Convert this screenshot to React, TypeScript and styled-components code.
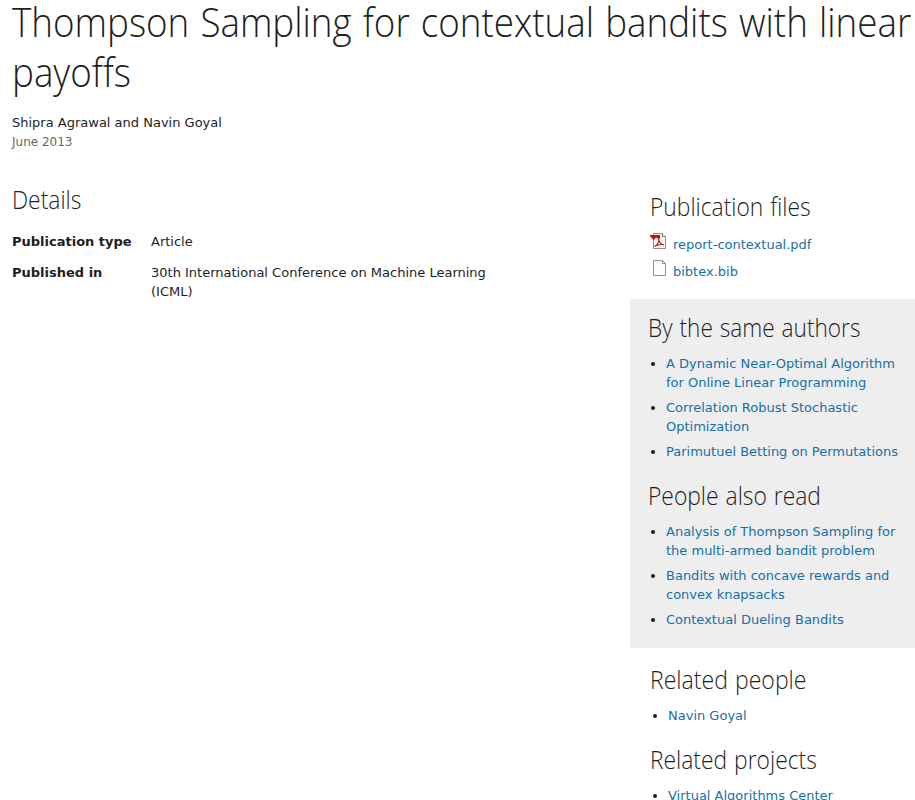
import React from "react";
import styled, { createGlobalStyle } from "styled-components";

const GlobalStyle = createGlobalStyle`
  * { box-sizing: border-box; }
  html, body { margin: 0; padding: 0; background: #fff; overflow: hidden; }
  body { font: 13px/19px "DejaVu Sans", Verdana, sans-serif; color: #1e1e1e; }
`;

const Page = styled.div`
  display: flow-root;
  width: 915px;
  height: 800px;
  overflow: hidden;
`;

const Header = styled.header`
  padding-left: 12px;
`;

const Title = styled.h1`
  margin: -3px 0 0;
  font: 300 40px/50px "Open Sans", "Noto Sans", sans-serif;
  color: #1e1e1e;
`;

const TitleLine = styled.span`
  display: block;
  width: max-content;
  transform: scaleX(0.919);
  transform-origin: 0 0;
  word-spacing: 1.700px;
  white-space: nowrap;
`;

const Authors = styled.div`
  margin-top: 16px;
`;

const PublishDate = styled.div`
  height: 19px;
  padding-top: 1px;
  font-size: 12px;
  line-height: 18px;
  color: #666;
`;

const Columns = styled.div`
  display: grid;
  grid-template-columns: 618px 285px;
  padding-left: 12px;
`;

const Details = styled.main`
  padding-top: 32px;
`;

const Heading = styled.h2<{ $stretch?: number }>`
  margin: 0;
  width: max-content;
  font: 300 26px/32px "Open Sans", "Noto Sans", sans-serif;
  color: #1e1e1e;
  white-space: nowrap;
  transform: scaleX(${(p) => p.$stretch ?? 0.878});
  transform-origin: 0 0;
  word-spacing: 1.2px;
`;

const Facts = styled.dl`
  display: grid;
  grid-template-columns: 139px 350px;
  row-gap: 12px;
  margin: 17px 0 0;
`;

const Term = styled.dt`
  font-weight: bold;
`;

const Value = styled.dd`
  margin: 0;
`;

const Sidebar = styled.aside`
  padding-top: 39px;
`;

const Section = styled.section`
  padding-left: 20px;
`;

const Files = styled.div`
  margin-top: 9px;
  display: grid;
  grid-auto-rows: 27px;
`;

const FileRow = styled.div`
  display: flex;
  height: 27px;

  svg { flex: none; margin-right: 7px; margin-top: 2px; }
`;

const Link = styled.a`
  color: #1570a6;
  text-decoration: none;
`;

const FileLink = styled(Link)`
  padding-top: 4px;
`;

const Panel = styled.div`
  height: 349px;
  margin-top: 14px;
  padding: 12px 0 0 18px;
  background: #eee;
`;

const List = styled.ul`
  margin: 11px 0 0;
  padding: 0 0 0 18px;
`;

const Item = styled.li`
  margin-bottom: 6px;
  white-space: nowrap;
`;

const Group = styled.div<{ $gap: number }>`
  padding-top: ${(p) => p.$gap}px;
`;

const PdfIcon = () => (
  <svg width="16" height="16" viewBox="0 0 16 16">
    <path d="M3.500.5h9l3 3v12h-12z" fill="#fdf9f9" stroke="#9c8886" />
    <path d="M12.500.5v3h3" fill="#fff" stroke="#817878" />
    <path d="M0 2h10v3.500H7.500L6 4.500 4 7 0 3.500z" fill="#bd1515" />
    <path d="M4.500 13.500c3-1.500 4.800-4.500 4.300-8.500 0 4 2 6.500 5.200 6.700-4-.5-7 .2-9.500 1.800" fill="none" stroke="#a52020" strokeWidth="1.100" />
  </svg>
);

const DocumentIcon = () => (
  <svg width="16" height="16" viewBox="0 0 16 16">
    <path d="M3.500.5h9l3 3v12h-12z" fill="#fdfdfd" stroke="#929292" />
    <path d="M12.500.5v3h3" fill="none" stroke="#929292" />
  </svg>
);

type Entry = string[];

const LinkList = ({ entries }: { entries: Entry[] }) => (
  <List>
    {entries.map((lines) => (
      <Item key={lines[0]}>
        <Link>
          {lines.map((line, i) => (
            <React.Fragment key={line}>
              {i > 0 && <br />}
              {line}
            </React.Fragment>
          ))}
        </Link>
      </Item>
    ))}
  </List>
);

export default function App() {
  return (
    <>
      <GlobalStyle />
      <Page>
        <Header>
          <Title>
            <TitleLine>Thompson Sampling for contextual bandits with linear</TitleLine>
            <TitleLine>payoffs</TitleLine>
          </Title>
          <Authors>Shipra Agrawal and Navin Goyal</Authors>
          <PublishDate>June 2013</PublishDate>
        </Header>
        <Columns>
          <Details>
            <Heading>Details</Heading>
            <Facts>
              <Term>Publication type</Term>
              <Value>Article</Value>
              <Term>Published in</Term>
              <Value>30th International Conference on Machine Learning (ICML)</Value>
            </Facts>
          </Details>
          <Sidebar>
            <Section>
              <Heading>Publication files</Heading>
              <Files>
                <FileRow><PdfIcon /><FileLink>report-contextual.pdf</FileLink></FileRow>
                <FileRow><DocumentIcon /><FileLink>bibtex.bib</FileLink></FileRow>
              </Files>
            </Section>
            <Panel>
              <Heading $stretch={0.87}>By the same authors</Heading>
              <LinkList
                entries={[
                  ["A Dynamic Near-Optimal Algorithm", "for Online Linear Programming"],
                  ["Correlation Robust Stochastic", "Optimization"],
                  ["Parimutuel Betting on Permutations"],
                ]}
              />
              <Group $gap={12}>
                <Heading>People also read</Heading>
                <LinkList
                  entries={[
                    ["Analysis of Thompson Sampling for", "the multi-armed bandit problem"],
                    ["Bandits with concave rewards and", "convex knapsacks"],
                    ["Contextual Dueling Bandits"],
                  ]}
                />
              </Group>
            </Panel>
            <Section>
              <Group $gap={15}>
                <Heading $stretch={0.887}>Related people</Heading>
                <LinkList entries={[["Navin Goyal"]]} />
              </Group>
              <Group $gap={12}>
                <Heading>Related projects</Heading>
                <LinkList entries={[["Virtual Algorithms Center"]]} />
              </Group>
            </Section>
          </Sidebar>
        </Columns>
      </Page>
    </>
  );
}
